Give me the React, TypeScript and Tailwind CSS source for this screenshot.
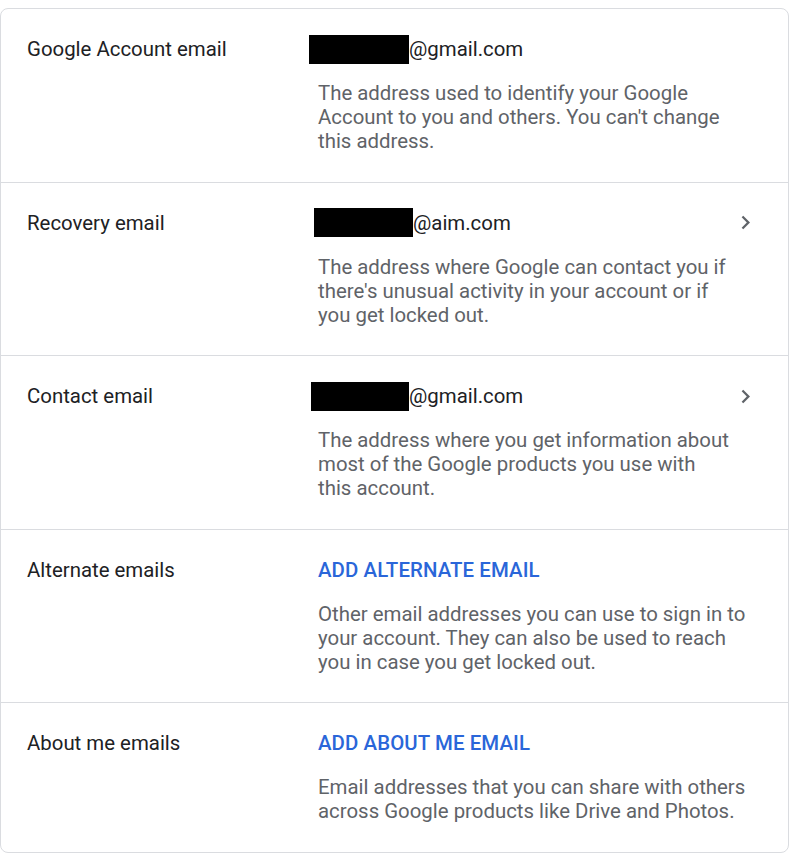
import React from "react";

type Row = {
  label: string;
  redactW?: number;
  redactShift?: number;
  domain?: string;
  link?: string;
  chevron?: boolean;
  desc: string[];
};

const rows: Row[] = [
  {
    label: "Google Account email",
    redactW: 100,
    redactShift: -9,
    domain: "@gmail.com",
    desc: [
      "The address used to identify your Google",
      "Account to you and others. You can't change",
      "this address.",
    ],
  },
  {
    label: "Recovery email",
    redactW: 99,
    redactShift: -4,
    domain: "@aim.com",
    chevron: true,
    desc: [
      "The address where Google can contact you if",
      "there's unusual activity in your account or if",
      "you get locked out.",
    ],
  },
  {
    label: "Contact email",
    redactW: 98,
    redactShift: -7,
    domain: "@gmail.com",
    chevron: true,
    desc: [
      "The address where you get information about",
      "most of the Google products you use with",
      "this account.",
    ],
  },
  {
    label: "Alternate emails",
    link: "ADD ALTERNATE EMAIL",
    desc: [
      "Other email addresses you can use to sign in to",
      "your account. They can also be used to reach",
      "you in case you get locked out.",
    ],
  },
  {
    label: "About me emails",
    link: "ADD ABOUT ME EMAIL",
    desc: [
      "Email addresses that you can share with others",
      "across Google products like Drive and Photos.",
    ],
  },
];

function Chevron() {
  return (
    <svg width="27" height="27" viewBox="0 0 24 24" className="shrink-0">
      <path d="M10 6L8.59 7.41 13.17 12l-4.58 4.59L10 18l6-6z" fill="#5f6368" />
    </svg>
  );
}

export default function App() {
  return (
    <div
      className="w-[790px] h-[855px] bg-white pt-[8px]"
      style={{ fontFamily: "Roboto, 'Noto Sans', Arial, sans-serif" }}
    >
      <div className="w-[789px] border border-[#dadce0] rounded-[8px] bg-white">
        {rows.map((r, i) => (
          <div
            key={i}
            className={`flex pt-[28px] pb-[28.5px] ${i > 0 ? "border-t border-[#dadce0]" : ""}`}
          >
            <div className="w-[317px] shrink-0 pl-[26px] text-[20.4px] leading-[24px] text-[#202124]">
              {r.label}
            </div>
            <div className="w-[441px] shrink-0">
              <div className="flex items-center justify-between h-[24px]">
                {r.link ? (
                  <span className="text-[20.4px] leading-[24px] font-medium text-[#2a66d9] tracking-[0.1px]">
                    {r.link}
                  </span>
                ) : (
                  <span className="flex items-center text-[20.4px] leading-[24px] text-[#202124]">
                    <span
                      className="inline-block bg-black h-[29px]"
                      style={{ width: r.redactW, marginLeft: r.redactShift }}
                    />
                    <span>{r.domain}</span>
                  </span>
                )}
                {r.chevron && <Chevron />}
              </div>
              <div className="mt-[20px] flex flex-col text-[20.4px] leading-[24px] text-[#5f6368]">
                {r.desc.map((line, j) => (
                  <span key={j} className="whitespace-nowrap">
                    {line}
                  </span>
                ))}
              </div>
            </div>
          </div>
        ))}
      </div>
    </div>
  );
}
